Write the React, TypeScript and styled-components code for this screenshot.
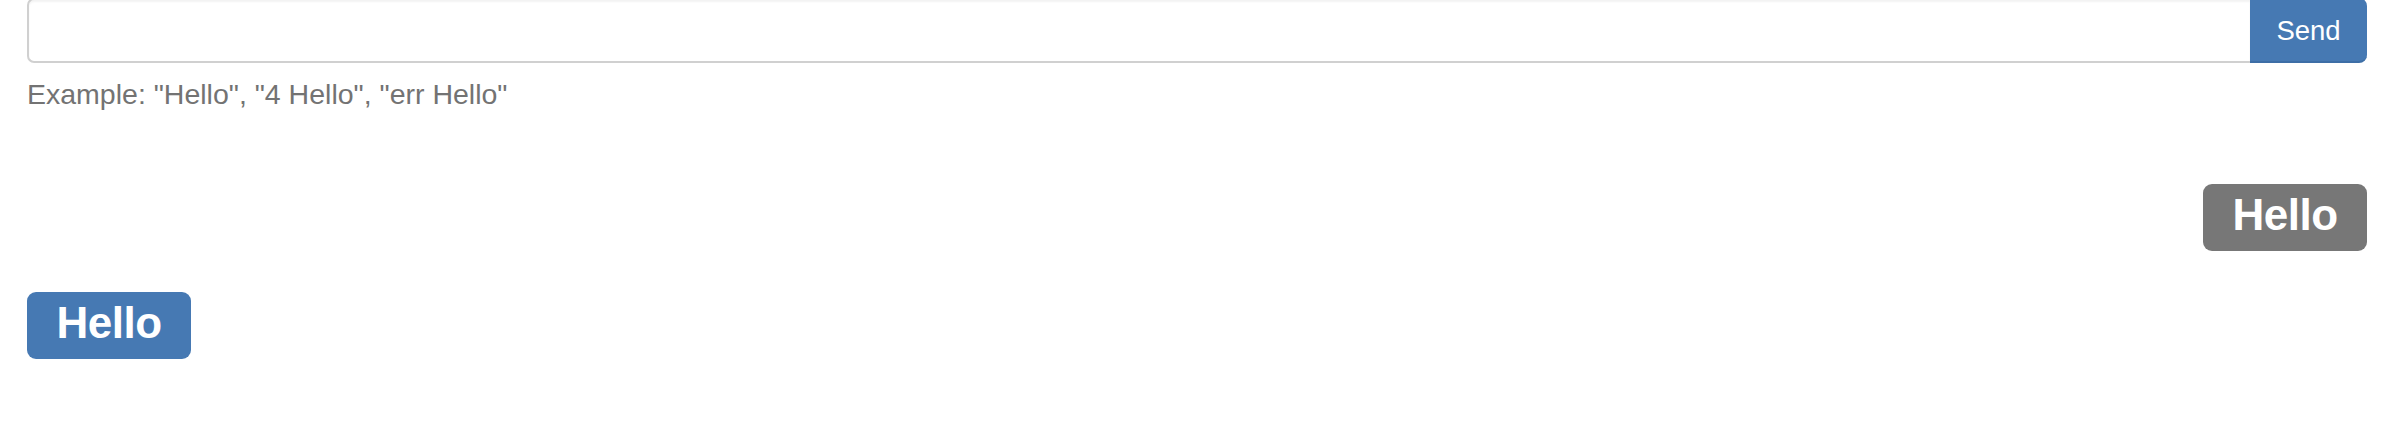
import React from 'react';
import styled, { createGlobalStyle } from 'styled-components';

const GlobalStyle = createGlobalStyle`
  html, body {
    margin: 0;
    padding: 0;
    background: #fff;
  }
  body {
    font-family: "Liberation Sans", Arial, Helvetica, sans-serif;
    color: #333;
  }
`;

interface Message {
  text: string;
  mine: boolean;
}

const messages: Message[] = [
  { text: 'Hello', mine: true },
  { text: 'Hello', mine: false },
];

export default function App() {
  return (
    <S.Page>
      <GlobalStyle />
      <S.InputGroup>
        <S.Input type="text" />
        <S.SendButton type="button">Send</S.SendButton>
      </S.InputGroup>
      <S.Help>Example: "Hello", "4 Hello", "err Hello"</S.Help>
      <S.Messages>
        {messages.map((m, i) => (
          <S.Row key={i} $mine={m.mine}>
            <S.Label $mine={m.mine}>{m.text}</S.Label>
          </S.Row>
        ))}
      </S.Messages>
    </S.Page>
  );
}

const S = {
  Page: styled.div`
    padding: 0 41px 0 27px;
    width: 2408px;
    height: 444px;
    box-sizing: border-box;
    overflow: hidden;
  `,
  InputGroup: styled.div`
    display: flex;
    height: 65px;
    margin-top: -2px;
  `,
  Input: styled.input`
    flex: 1;
    min-width: 0;
    box-sizing: border-box;
    height: 100%;
    border: 2px solid #d0d0d0;
    border-right: none;
    border-radius: 7px 0 0 7px;
    box-shadow: inset 0 2px 2px rgba(0, 0, 0, 0.05);
    outline: none;
    padding: 0 18px;
    font-size: 27px;
    font-family: inherit;
  `,
  SendButton: styled.button`
    width: 117px;
    height: 100%;
    box-sizing: border-box;
    border: none;
    border-bottom: 2px solid #3d6ea6;
    border-radius: 0 8px 8px 0;
    background: #4679b3;
    color: #fff;
    font-family: inherit;
    font-size: 27.5px;
    padding: 2px 0 0;
    cursor: pointer;
  `,
  Help: styled.p`
    margin: 12px 0 0;
    font-size: 28.5px;
    line-height: 39px;
    color: #737373;
  `,
  Messages: styled.div`
    display: flex;
    flex-direction: column;
    gap: 41px;
    margin-top: 70px;
  `,
  Row: styled.div<{ $mine: boolean }>`
    display: flex;
    justify-content: ${p => (p.$mine ? 'flex-end' : 'flex-start')};
  `,
  Label: styled.span<{ $mine: boolean }>`
    display: inline-block;
    box-sizing: border-box;
    width: 164px;
    text-align: center;
    padding: 9px 0 14px;
    font-size: 44px;
    line-height: 44px;
    font-weight: 700;
    letter-spacing: -0.5px;
    color: #fff;
    border-radius: 9px;
    background: ${p => (p.$mine ? '#777777' : '#4679b3')};
  `,
};
